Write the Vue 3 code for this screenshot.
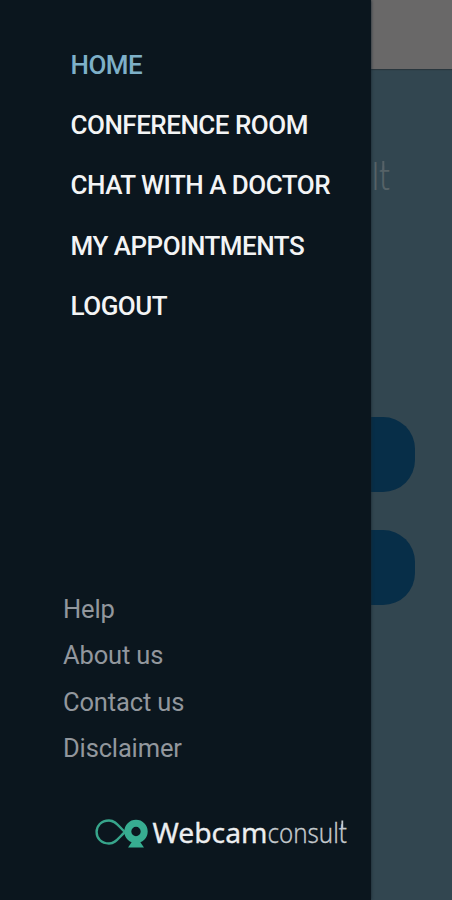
<script setup>
const mainItems = [
  { label: 'HOME', key: 'home', active: true },
  { label: 'CONFERENCE ROOM', key: 'conference' },
  { label: 'CHAT WITH A DOCTOR', key: 'chat' },
  { label: 'MY APPOINTMENTS', key: 'appointments' },
  { label: 'LOGOUT', key: 'logout' },
]
const infoItems = ['Help', 'About us', 'Contact us', 'Disclaimer']
</script>

<template>
  <div class="screen">
    <main class="page">
      <div class="topbar"></div>
      <div class="brand">
        <svg width="50" height="46" viewBox="350 154 50 46">
          <text x="353" y="190" textLength="37" lengthAdjust="spacingAndGlyphs">ult</text>
          <path d="M383.300 161V170" />
        </svg>
      </div>
      <div class="action"></div>
      <div class="action"></div>
    </main>
    <aside class="drawer">
      <nav class="main-nav">
        <a v-for="item in mainItems" :key="item.key" :class="[item.key, { active: item.active }]">{{ item.label }}</a>
      </nav>
      <nav class="info-nav">
        <a v-for="item in infoItems" :key="item">{{ item }}</a>
      </nav>
      <svg class="logo" width="264" height="44" viewBox="94 812 264 44">
        <path class="loop" d="M125 832C119 827 116 820.500 109 820.500C101 820.500 96.600 826 96.600 832C96.600 838 101 843.500 109 843.500C116 843.500 119 837 125 832Z" />
        <circle class="lens" cx="136" cy="831.500" r="8.200" />
        <path class="foot" d="M132.500 841H139.500L144 847.500H128Z" />
        <text class="web" x="152.500" y="842.500" textLength="115" lengthAdjust="spacingAndGlyphs">Webcam</text>
        <text class="consult" x="267.500" y="842.500" textLength="79.500" lengthAdjust="spacingAndGlyphs">consult</text>
        <path class="stem" d="M342.300 820.500V829" />
      </svg>
    </aside>
  </div>
</template>

<style>
body {
  background: #0b161e;
}
</style>

<style scoped>
.screen {
  position: relative;
  width: 452px;
  height: 900px;
  overflow: hidden;
  font-family: Roboto, "Liberation Sans", sans-serif;
}
.page {
  display: flex;
  flex-direction: column;
  height: 900px;
  background: #324650;
}
.topbar {
  height: 69px;
  flex: none;
  background: #696868;
  box-shadow: 0 1px 1px #29363d;
}
.brand {
  height: 347.500px;
  flex: none;
  padding: 85px 0 0 350px;
  box-sizing: border-box;
}
.brand svg {
  display: block;
}
.brand text {
  font-family: "Noto Sans", "Open Sans", sans-serif;
  font-size: 37px;
  font-weight: 300;
  fill: #566267;
}
.brand path {
  stroke: #566267;
  stroke-width: 2;
}
.action {
  width: 377px;
  height: 75px;
  flex: none;
  margin: 0 0 38px 37.500px;
  border-radius: 32px;
  background: #072e48;
}
.drawer {
  position: absolute;
  inset: 0 auto 0 0;
  display: flex;
  flex-direction: column;
  width: 371px;
  background: #0b161e;
  box-shadow: 0 0 3px #15242d;
}
.main-nav {
  display: flex;
  flex-direction: column;
  padding: 35px 0 0 70.500px;
}
.main-nav a {
  height: 60.200px;
  line-height: 60px;
  font-size: 26px;
  font-weight: 500;
  letter-spacing: -0.500px;
  color: #f3f4f5;
  white-space: nowrap;
}
.main-nav a.active {
  color: #7eb0c8;
}
.info-nav {
  display: flex;
  flex-direction: column;
  padding: 249.750px 0 0 63px;
}
.info-nav a {
  height: 46.500px;
  line-height: 46px;
  font-size: 25.500px;
  letter-spacing: -0.150px;
  color: #92979d;
  white-space: nowrap;
}
.logo {
  display: block;
  margin: 40px 0 0 94px;
}
.loop {
  fill: none;
  stroke: #37a58b;
  stroke-width: 2.400;
}
.lens {
  fill: none;
  stroke: #37ad91;
  stroke-width: 7;
}
.foot {
  fill: #37ad91;
}
.logo text {
  font-family: "Noto Sans", "Open Sans", sans-serif;
  font-size: 28px;
}
.web {
  fill: #eceef0;
  stroke: #eceef0;
  stroke-width: 0.300;
  font-weight: 400;
}
.consult {
  fill: #c4c9cd;
  stroke: #c4c9cd;
  stroke-width: 0.300;
  font-weight: 300;
}
.stem {
  stroke: #c4c9cd;
  stroke-width: 1.800;
}
</style>
